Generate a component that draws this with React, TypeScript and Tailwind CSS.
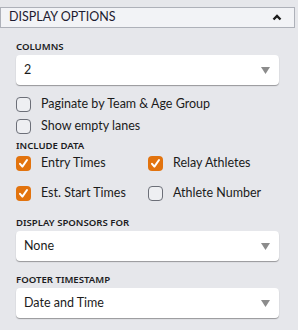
import React from "react"

const font = { fontFamily: 'Lato, "Noto Sans", sans-serif' }
const labelFont = { fontFamily: '"Noto Sans", "Open Sans", sans-serif' }

function Arrow() {
  return (
    <svg width="9" height="7" viewBox="0 0 9 7" className="shrink-0">
      <polygon points="0,0 9,0 4.5,7" fill="#8c8c8c" />
    </svg>
  )
}

function Select({ value }: { value: string }) {
  return (
    <div className="mt-[2px] h-[30px] w-[263px] rounded-[4px] bg-white shadow-[0_1px_1px_rgba(0,0,0,0.35)] flex items-center justify-between pl-[8px] pr-[9px]">
      <span className="text-[12.5px] text-[#1b1b1b]">{value}</span>
      <Arrow />
    </div>
  )
}

function Label({ text, className = "" }: { text: string; className?: string }) {
  return (
    <div
      className={`h-[12px] leading-[12px] text-[9.6px] font-semibold text-[#1b1b22] uppercase ${className}`}
      style={labelFont}
    >
      {text}
    </div>
  )
}

function Check({ label, checked }: { label: string; checked?: boolean }) {
  return (
    <div className="h-[22px] flex items-center">
      {checked ? (
        <div className="w-[15px] h-[15px] rounded-[4px] bg-[#e2730e] flex items-center justify-center">
          <svg width="11" height="11" viewBox="0 0 11 11">
            <polyline points="2,5.8 4.4,8.6 9,2" fill="none" stroke="white" strokeWidth="2" strokeLinecap="round" strokeLinejoin="round" />
          </svg>
        </div>
      ) : (
        <div className="w-[15px] h-[15px] rounded-[4px] border border-[#6c6f78] bg-[#eeeff2]" />
      )}
      <span className="ml-[10px] text-[12.5px] text-[#1b1b1b]">{label}</span>
    </div>
  )
}

export default function App() {
  return (
    <div className="w-[298px] h-[330px] bg-[#e6e7eb] pt-[7px] overflow-hidden" style={font}>
      <div className="w-[295px] h-[21px] border border-[#aeb1b9] bg-[#f2f3f6] flex items-center justify-between pl-[8px] pr-[12px]">
        <span className="text-[12.5px] text-[#1d1b30] leading-none">DISPLAY OPTIONS</span>
        <svg width="10" height="7" viewBox="0 0 10 7">
          <polyline points="1.5,5.5 5,2 8.5,5.5" fill="none" stroke="#1b1b1b" strokeWidth="2.4" />
        </svg>
      </div>

      <div className="pl-[16px]">
        <Label text="Columns" className="mt-[13px]" />
        <Select value="2" />

        <div className="mt-[8px]">
          <Check label="Paginate by Team & Age Group" />
          <Check label="Show empty lanes" />
        </div>

        <Label text="Include Data" className="mt-[3px]" />
        <div className="grid grid-cols-[132px_1fr] gap-y-[8px]">
          <Check label="Entry Times" checked />
          <Check label="Relay Athletes" checked />
          <Check label="Est. Start Times" checked />
          <Check label="Athlete Number" />
        </div>

        <Label text="Display Sponsors For" className="mt-[13px]" />
        <Select value="None" />

        <Label text="Footer Timestamp" className="mt-[13px]" />
        <Select value="Date and Time" />
      </div>
    </div>
  )
}
